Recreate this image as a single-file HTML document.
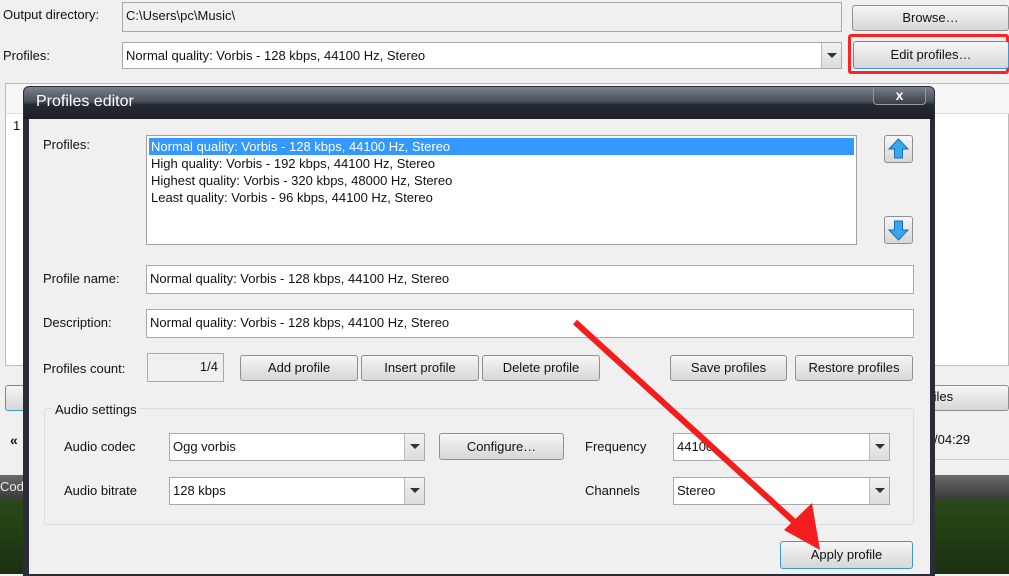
<!DOCTYPE html><html><head><style>
*{box-sizing:border-box;margin:0;padding:0}
body{width:1009px;height:574px;overflow:hidden;background:#f0f0f0;font-family:"Liberation Sans","DejaVu Sans",sans-serif;font-size:13px;color:#111;position:relative}
.a{position:absolute}
.in{position:absolute;background:#fff;border:1px solid #a9a9a9;padding:3px 3px;white-space:nowrap;font-size:13px}
.btn{position:absolute;border:1px solid #8e8f8f;border-radius:3px;background:linear-gradient(#f6f6f6,#e6e6e6 50%,#d7d7d7);text-align:center;font-size:13px;line-height:22px}
.dd{position:absolute;right:0;top:0;bottom:0;width:20px;border-left:1px solid #bbb;background:linear-gradient(#f2f2f2,#dcdcdc)}
.dd:after{content:"";position:absolute;left:5px;top:10px;border-left:5px solid transparent;border-right:5px solid transparent;border-top:5px solid #333}
</style></head><body>
<div class="a" style="left:3px;top:7px">Output directory:</div>
<div class="in" style="left:122px;top:2px;width:720px;height:30px;background:#f0f0f0;padding-top:5px">C:\Users\pc\Music\</div>
<div class="btn" style="left:852px;top:5px;width:157px;height:26px;line-height:24px">Browse…</div>
<div class="a" style="left:3px;top:48px">Profiles:</div>
<div class="in" style="left:122px;top:42px;width:720px;height:27px;padding-top:5px">Normal quality: Vorbis - 128 kbps, 44100 Hz, Stereo<div class="dd"></div></div>
<div class="a" style="left:848px;top:34px;width:161px;height:40px;border:3px solid #f22;border-radius:3px"></div>
<div class="btn" style="left:853px;top:41px;width:156px;height:28px;line-height:26px;border-color:#3c9ad8">Edit profiles…</div>
<div class="a" style="left:5px;top:83px;width:1004px;height:283px;background:#fff;border:1px solid #bbb"></div>
<div class="a" style="left:6px;top:84px;width:1003px;height:30px;background:#f7f7f7;border-bottom:1px solid #ddd"></div>
<div class="a" style="left:13px;top:118px;font-size:13px">1</div>
<div class="btn" style="left:5px;top:385px;width:30px;height:26px;border-color:#3c9ad8"></div>
<div class="btn" style="left:925px;top:385px;width:84px;height:26px;text-align:left;padding-left:4px">files</div>
<div class="a" style="left:10px;top:432px;font-size:14px;font-weight:bold">«</div>
<div class="a" style="left:934px;top:432px">/04:29</div>
<div class="a" style="left:935px;top:420px;width:74px;height:40px;border-bottom:1px solid #ccc"></div>
<div class="a" style="left:0;top:475px;width:1009px;height:24px;background:linear-gradient(#6a6a6a,#3a3a3a);color:#eee;padding:4px 0 0 0">Code</div>
<div class="a" style="left:0;top:499px;width:1009px;height:75px;background:radial-gradient(circle at 990px 560px,#8ab85a,#3c6a1e 40px,transparent 90px),radial-gradient(circle at 5px 540px,#5a8a34,#34581c 30px,transparent 60px),linear-gradient(#2a4a18,#1a3010)"></div>
<div class="a" style="left:23px;top:86px;width:912px;height:490px;background:#2a2d35;border-radius:6px 6px 0 0"></div>
<div class="a" style="left:24px;top:87px;width:910px;height:32px;border-radius:5px 5px 0 0;background:linear-gradient(#7a7f8c,#4a4f5c 45%,#262a33 55%,#1c1f26)"></div>
<div class="a" style="left:36px;top:93px;color:#fff;font-size:16px">Profiles editor</div>
<div class="a" style="left:873px;top:87px;width:53px;height:18px;border:1px solid #999;border-top:none;border-radius:0 0 4px 4px;background:linear-gradient(#7a7f8c,#3a3e48);color:#fff;text-align:center;font-weight:bold;font-size:14px;line-height:16px">x</div>
<div class="a" style="left:29px;top:119px;width:901px;height:455px;background:#f0f0f0"></div>
<div class="a" style="left:43px;top:137px">Profiles:</div>
<div class="a" style="left:146px;top:135px;width:711px;height:110px;background:#fff;border:1px solid #a0a0a0;padding:2px 2px;line-height:17px">
<div style="background:#3399ff;color:#fff;padding-left:2px">Normal quality: Vorbis - 128 kbps, 44100 Hz, Stereo</div>
<div style="padding-left:2px">High quality: Vorbis - 192 kbps, 44100 Hz, Stereo</div>
<div style="padding-left:2px">Highest quality: Vorbis - 320 kbps, 48000 Hz, Stereo</div>
<div style="padding-left:2px">Least quality: Vorbis - 96 kbps, 44100 Hz, Stereo</div></div>
<div class="btn" style="left:884px;top:135px;width:29px;height:28px"><svg width="27" height="26" viewBox="0 0 27 26"><path d="M13.5 3 L23 13 H17.5 V22 H9.5 V13 H4 Z" fill="#3aa7ec" stroke="#1470b8"/></svg></div>
<div class="btn" style="left:884px;top:216px;width:29px;height:28px"><svg width="27" height="26" viewBox="0 0 27 26"><path d="M13.5 23 L23 13 H17.5 V4 H9.5 V13 H4 Z" fill="#3aa7ec" stroke="#1470b8"/></svg></div>
<div class="a" style="left:43px;top:271px">Profile name:</div>
<div class="in" style="left:146px;top:265px;width:768px;height:29px;padding-top:5px">Normal quality: Vorbis - 128 kbps, 44100 Hz, Stereo</div>
<div class="a" style="left:43px;top:315px">Description:</div>
<div class="in" style="left:146px;top:309px;width:768px;height:29px;padding-top:5px">Normal quality: Vorbis - 128 kbps, 44100 Hz, Stereo</div>
<div class="a" style="left:43px;top:361px">Profiles count:</div>
<div class="in" style="left:147px;top:353px;width:77px;height:29px;background:#f0f0f0;text-align:right;padding:5px 5px">1/4</div>
<div class="btn" style="left:240px;top:355px;width:118px;height:26px;line-height:24px">Add profile</div>
<div class="btn" style="left:361px;top:355px;width:118px;height:26px;line-height:24px">Insert profile</div>
<div class="btn" style="left:482px;top:355px;width:118px;height:26px;line-height:24px">Delete profile</div>
<div class="btn" style="left:670px;top:355px;width:117px;height:26px;line-height:24px">Save profiles</div>
<div class="btn" style="left:795px;top:355px;width:118px;height:26px;line-height:24px">Restore profiles</div>
<div class="a" style="left:44px;top:408px;width:870px;height:117px;border:1px solid #d5dfe5;border-radius:3px"></div>
<div class="a" style="left:52px;top:402px;background:#f0f0f0;padding:0 3px">Audio settings</div>
<div class="a" style="left:64px;top:439px">Audio codec</div>
<div class="in" style="left:169px;top:433px;width:256px;height:28px;padding-top:5px">Ogg vorbis<div class="dd"></div></div>
<div class="a" style="left:64px;top:483px">Audio bitrate</div>
<div class="in" style="left:169px;top:477px;width:256px;height:28px;padding-top:5px">128 kbps<div class="dd"></div></div>
<div class="btn" style="left:439px;top:433px;width:125px;height:27px;line-height:25px">Configure…</div>
<div class="a" style="left:585px;top:439px">Frequency</div>
<div class="in" style="left:673px;top:433px;width:217px;height:28px;padding-top:5px">44100<div class="dd"></div></div>
<div class="a" style="left:585px;top:483px">Channels</div>
<div class="in" style="left:673px;top:477px;width:217px;height:28px;padding-top:5px">Stereo<div class="dd"></div></div>
<div class="btn" style="left:780px;top:541px;width:133px;height:28px;line-height:26px;border-color:#3c9ad8">Apply profile</div>
<svg class="a" style="left:0;top:0" width="1009" height="574"><line x1="575" y1="322" x2="800" y2="527" stroke="#f31d1d" stroke-width="6"/><path d="M820 550 L784 530 L812 503 Z" fill="#f31d1d"/></svg>
</body></html>
